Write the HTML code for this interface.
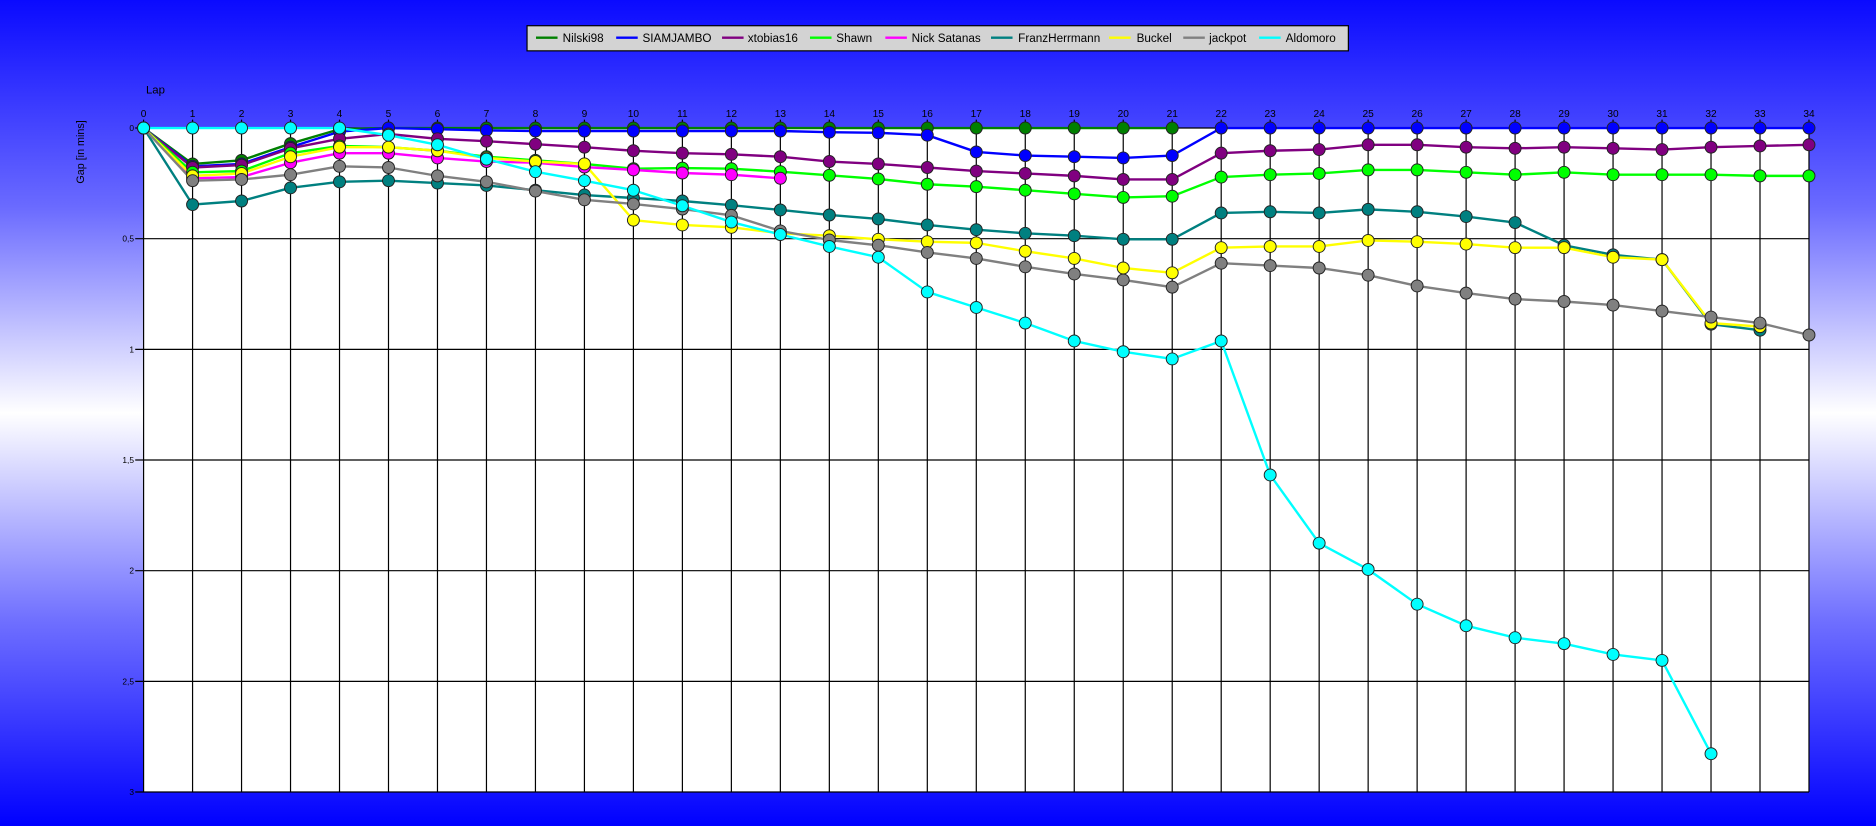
<!DOCTYPE html>
<html><head><meta charset="utf-8">
<style>
html,body{margin:0;padding:0;width:1876px;height:826px;overflow:hidden;}
body{background:linear-gradient(to bottom,#0a0aff 0%,#6a6aff 25%,#ffffff 50%,#7070ff 75%,#0000ff 100%);}
svg{display:block;font-family:"Liberation Sans",sans-serif;}
</style></head><body>
<svg id="c" width="1876" height="826" viewBox="0 0 1568 690.4" xmlns="http://www.w3.org/2000/svg">
<rect x="120" y="107" width="1392" height="555" fill="#fff"/>
<g id="grid"></g>
<text x="122" y="78" font-size="9.5" fill="#000">Lap</text>
<text transform="translate(70,127) rotate(-90)" text-anchor="middle" font-size="9" fill="#000">Gap [in mins]</text>
<g id="series"></g>
<g id="legend">
<rect x="440.5" y="21.5" width="686.5" height="21" fill="#d3d3d3" stroke="#000" stroke-width="1"/>
</g>
</svg>
<script>
var NS="http://www.w3.org/2000/svg";
function el(t,a,p,txt){var e=document.createElementNS(NS,t);for(var k in a)e.setAttribute(k,a[k]);if(txt!==undefined)e.textContent=txt;p.appendChild(e);return e;}
var g=document.getElementById('grid'),X=function(i){return 120+i*1392/34;};
for(var i=0;i<=34;i++){var x=X(i);el('line',{x1:x,y1:100,x2:x,y2:662,stroke:'#000','stroke-width':1},g);
el('text',{x:x,y:98,'font-size':8.5,'text-anchor':'middle',fill:'#000'},g,''+i);}
var yl=['0','0,5','1','1,5','2','2,5','3'];
for(var k=0;k<7;k++){var y=107+k*92.5;el('line',{x1:113,y1:y,x2:1512,y2:y,stroke:'#000','stroke-width':1},g);
el('text',{x:112,y:y+2.5,'font-size':7,'text-anchor':'end',fill:'#000'},g,yl[k]);}
var S=[
['Nilski98','#008000',[107,137,134,120,108,107,107,107,107,107,107,107,107,107,107,107,107,107,107,107,107,107]],
['SIAMJAMBO','#0000ff',[107,139,137,123,110,107,108,109,109.5,109.5,109.5,109.5,109.5,109.5,110.5,111,113,127,130,131,132,130,107,107,107,107,107,107,107,107,107,107,107,107,107]],
['xtobias16','#800080',[107,140,138,124,116,112,116,118,120.5,123,126,128,129,131,135,137,140,143,145,147,150,150,128,126,125,121,121,123,124,123,124,125,123,122,121]],
['Shawn','#00ff00',[107,144,143,128,122,123,126,131,134,137,141,140.5,141,143.5,146.5,149.6,154,156,159,162,165,164,148,146,145,142,142,144,146,144,146,146,146,147,147]],
['Nick Satanas','#ff00ff',[107,149,148,136,128,128,132,135,136,139.6,142,144.6,146,149]],
['FranzHerrmann','#008080',[107,171,168,157,152,151,153,155,159,163,165.5,168,171.5,175.5,179.7,183,188,192,195,197,200,200,178,177,178,175,177,181,186,205,213,217,271,276]],
['Buckel','#ffff00',[107,147,145,131,123,123,126,132,135,137,184,188,190,195,197,200,202,203,210,216,224,228,207,206,206,201,202,204,207,207,215,217,270,273]],
['jackpot','#808080',[107,151,150,146,139,140,147,152,159.7,167,170.5,174.7,180,193,200.6,205,211,216,223,229,234,240,220,222,224,230,239,245,250,252,255,260,265,270,280]],
['Aldomoro','#00ffff',[107,107,107,107,107,113,121,133,143.5,151,159,172,185.6,196,206,215,244,257,270,285,294,300,285,397,454,476,505,523,533,538,547,552,630]]
];
var sg=document.getElementById('series');
S.forEach(function(s){var pts=s[2].map(function(v,i){return X(i)+','+v;}).join(' ');
el('polyline',{points:pts,fill:'none',stroke:s[1],'stroke-width':2,'stroke-linejoin':'round'},sg);});
S.forEach(function(s){s[2].forEach(function(v,i){el('circle',{cx:X(i),cy:v,r:5,fill:s[1],stroke:'#222','stroke-width':0.8},sg);});});
var lg=document.getElementById('legend');
var lx=[[448,470.3],[515,537],[603.5,625],[677,699],[740,762],[828.3,851],[927,950],[989,1010.6],[1052.4,1074.6]];
S.forEach(function(s,i){el('line',{x1:lx[i][0],y1:31.5,x2:lx[i][0]+18,y2:31.5,stroke:s[1],'stroke-width':2},lg);
el('text',{x:lx[i][1],y:35.3,'font-size':9.8,fill:'#000'},lg,s[0]);});
</script>
</body></html>
